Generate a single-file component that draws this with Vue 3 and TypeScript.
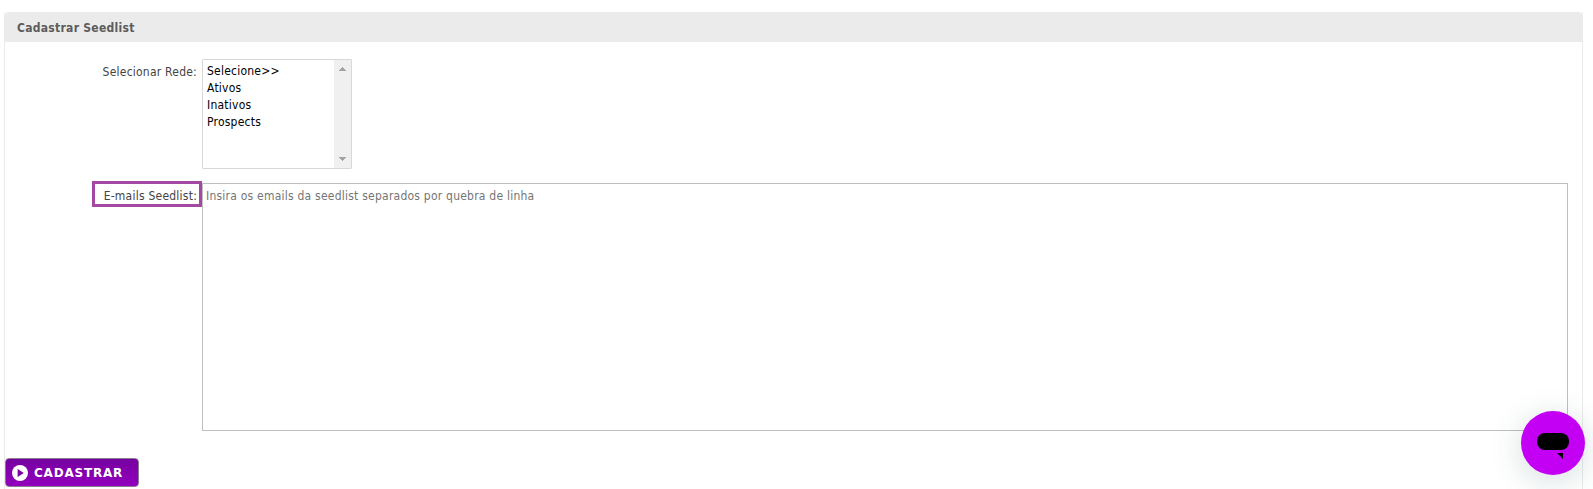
<script setup lang="ts">
import { ref } from 'vue'

const networks: string[] = ['Selecione>>', 'Ativos', 'Inativos', 'Prospects']
const selected = ref<string>('')
const emails = ref<string>('')
</script>

<template>
  <main class="page">
    <form class="panel" @submit.prevent>
      <h1 class="title">Cadastrar Seedlist</h1>
      <div class="row network">
        <span class="label">Selecionar Rede:</span>
        <div class="listbox" role="listbox">
          <ul class="options">
            <li
              v-for="name in networks"
              :key="name"
              role="option"
              :aria-selected="selected === name"
              @click="selected = name"
            >{{ name }}</li>
          </ul>
          <div class="scrollbar">
            <svg width="8" height="4" viewBox="0 0 8 4" shape-rendering="crispEdges"><path d="M3 0h1v1h1v1h1v1h1v1H0V3h1V2h1V1h1z" fill="#a3a3a3" /></svg>
            <svg width="8" height="4" viewBox="0 0 8 4" shape-rendering="crispEdges"><path d="M0 0h7v1H6v1H5v1H4v1H3V3H2V2H1V1H0z" fill="#a3a3a3" /></svg>
          </div>
        </div>
      </div>
      <div class="row emails">
        <label class="label marked" for="emails">E-mails Seedlist:</label>
        <textarea
          id="emails"
          v-model="emails"
          placeholder="Insira os emails da seedlist separados por quebra de linha"
        ></textarea>
      </div>
      <button class="submit" type="submit">
        <svg width="16" height="16" viewBox="0 0 16 16">
          <circle cx="8" cy="8" r="8" fill="#fff" />
          <path d="M5.6 4v8L11.8 8z" fill="#7d00a6" />
        </svg>
        <span>CADASTRAR</span>
      </button>
    </form>
    <div class="chat" role="button" aria-label="Chat">
      <svg width="64" height="64" viewBox="0 0 64 64">
        <rect x="16" y="22" width="32" height="17" rx="8" />
        <path d="M36 42h6v6z" />
      </svg>
    </div>
  </main>
</template>

<style>
body {
  margin: 0;
  background: #fff;
  overflow: hidden;
}
</style>

<style scoped>
.page {
  height: 489px;
  box-sizing: border-box;
  padding: 12px 10px 0 4px;
  overflow: hidden;
  font: 12px/17px 'DejaVu Sans Condensed', 'DejaVu Sans', sans-serif;
  font-stretch: condensed;
  letter-spacing: 0.23px;
}
.panel {
  box-sizing: border-box;
  height: 500px;
  border: solid #ebebeb;
  border-width: 0 1px;
  border-radius: 2px 2px 0 0;
}
.title {
  box-sizing: border-box;
  margin: 0;
  height: 30px;
  line-height: 30px;
  padding: 1px 0 0 12px;
  background: #ebebeb;
  border-radius: 4px 4px 0 0;
  color: #5c5c5c;
  font-size: 12px;
  font-weight: bold;
  font-stretch: condensed;
  letter-spacing: 0.28px;
}
.row {
  display: flex;
}
.network {
  margin-top: 17px;
  height: 110px;
}
.label {
  box-sizing: border-box;
  width: 197px;
  padding: 5px 5px 0 0;
  text-align: right;
  color: #444;
  white-space: nowrap;
}
.listbox {
  box-sizing: border-box;
  width: 150px;
  height: 110px;
  display: flex;
  border: 1px solid #d8d8d8;
  border-radius: 1px;
}
.options {
  flex: 1;
  margin: 0;
  padding: 3px 0 0 4px;
  list-style: none;
  color: #000;
}
.options li {
  height: 17px;
}
.scrollbar {
  box-sizing: border-box;
  width: 17px;
  display: flex;
  flex-direction: column;
  justify-content: space-between;
  align-items: center;
  padding: 7px 0;
  background: #f0f0f0;
}
.emails {
  margin-top: 14px;
  height: 248px;
}
.marked {
  width: 110px;
  height: 26px;
  margin: -2px 0 0 87px;
  padding: 4px 2px 0 0;
  border: 3px solid #a349a4;
  line-height: 17px;
}
textarea {
  box-sizing: border-box;
  width: 1366px;
  height: 248px;
  margin: 0;
  padding: 4px 3px 3px;
  border: 1px solid #bfbfbf;
  border-radius: 0;
  resize: none;
  outline: 0;
  overflow: hidden;
  font: inherit;
  letter-spacing: inherit;
  color: #444;
}
textarea::placeholder {
  color: #757575;
  opacity: 1;
}
.submit {
  box-sizing: border-box;
  display: flex;
  align-items: center;
  width: 134px;
  height: 29px;
  margin: 27px 0 0;
  padding: 0 0 0 6px;
  gap: 6px;
  border: 1px solid #8b7a92;
  border-radius: 4px;
  background: linear-gradient(#7600a0, #9200bd);
  color: #fff;
  font: bold 12px/17px 'DejaVu Sans', sans-serif;
  letter-spacing: 0.8px;
}
.submit span {
  padding-top: 1px;
}
.chat {
  position: absolute;
  left: 1521px;
  top: 411px;
  width: 64px;
  height: 64px;
  border-radius: 50%;
  background: #c300f3;
  box-shadow: 0 6px 32px rgba(23, 73, 77, 0.18);
}
.chat svg {
  display: block;
}
</style>
